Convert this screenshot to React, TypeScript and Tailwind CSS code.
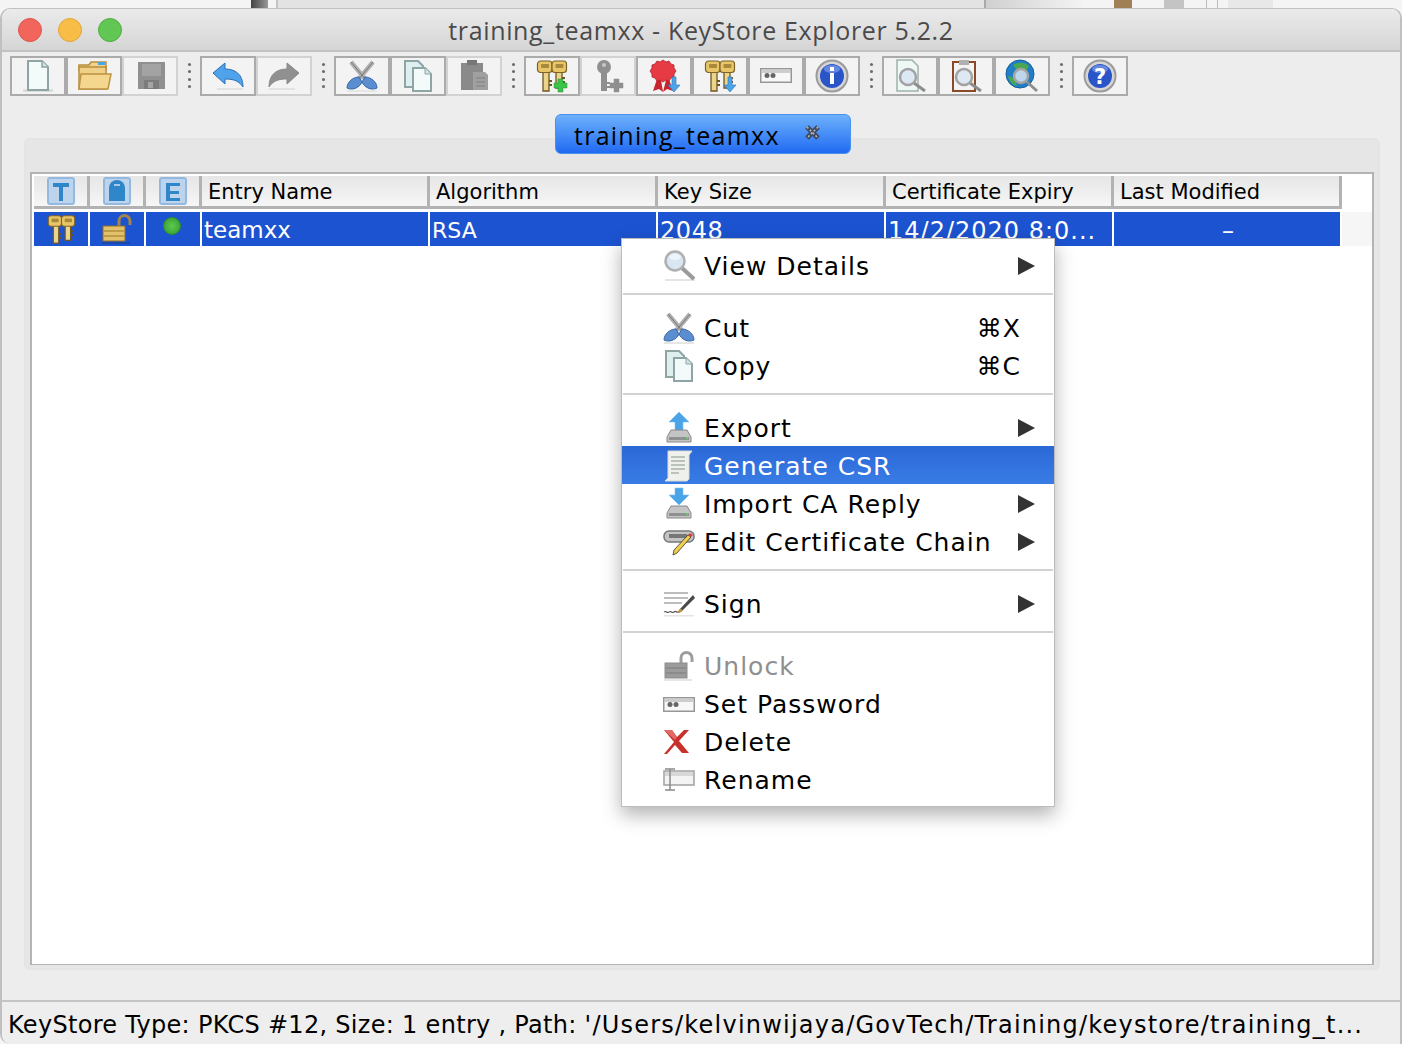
import type { ReactNode } from "react";

const FONT = "font-['DejaVu_Sans',sans-serif]";

// Small hand drawn versions of the app's toolbar and menu icons
const NewFile = () => (
  <svg width="32" height="34" viewBox="0 0 32 34">
    <rect x="1" y="30" width="30" height="3" fill="#dcdcdc" />
    <path d="M6 2h14l6 6v23H6z" fill="#f3fafa" stroke="#8fa5a5" strokeWidth="2" />
    <path d="M20 2v6h6" fill="#cfe3e3" stroke="#8fa5a5" strokeWidth="1.5" />
  </svg>
);

const Folder = () => (
  <svg width="36" height="34" viewBox="0 0 36 34">
    <path d="M3 6h10l2-3h15v8H3z" fill="#f3d28a" stroke="#b98f3f" strokeWidth="1.5" />
    <rect x="22" y="3" width="7" height="3" fill="#48a7e0" />
    <path d="M3 8h27v22H3z" fill="#f0cf86" stroke="#b98f3f" strokeWidth="1.5" />
    <path d="M5 15h30l-3 15H3z" fill="#f5d68f" stroke="#bd9344" strokeWidth="1.5" />
  </svg>
);

const Save = () => (
  <svg width="32" height="34" viewBox="0 0 32 34">
    <path d="M4 3h27v27H4z" fill="#909090" />
    <rect x="8" y="5" width="19" height="12" fill="#a3a3a3" />
    <rect x="10" y="21" width="15" height="9" fill="#7c7c7c" />
    <rect x="14" y="23" width="5" height="6" fill="#a5a5a5" />
  </svg>
);

const Arrow = ({ dir, grey }: { dir: "l" | "r"; grey?: boolean }) => (
  <svg width="34" height="30" viewBox="0 0 34 30" className={dir === "r" ? "-scale-x-100" : ""}>
    <path d="M2 12 14 2v6c10 0 18 5 18 18-4-6-9-8-18-8v5z" fill={grey ? "#909090" : "#4fa3ea"} stroke={grey ? "#8a8a8a" : "#2b6fb8"} strokeWidth="1" />
    <rect x="6" y="27" width="26" height="2" fill="#e2e2e2" />
  </svg>
);

const Cut = () => (
  <svg width="32" height="32" viewBox="0 0 32 32">
    <path d="M5 2 20 20M27 2 12 20" stroke="#b0b0b0" strokeWidth="4.5" />
    <path d="M5 2 20 20M27 2 12 20" stroke="#777" strokeWidth="1" />
    <path d="M1 28c0-6 6-11 12-11l3 5c-2 5-9 9-15 6zM31 28c0-6-6-11-12-11l-3 5c2 5 9 9 15 6z" fill="#5a8ed0" stroke="#3a69a8" strokeWidth="1" />
    <rect x="1" y="30" width="30" height="2" fill="#e6e6e6" />
  </svg>
);

const Copy = () => (
  <svg width="32" height="34" viewBox="0 0 32 34">
    <path d="M3 2h13l5 5v21H3z" fill="#dfeeee" stroke="#8fa5a5" strokeWidth="2" />
    <path d="M11 9h12l6 6v17H11z" fill="#f3fafa" stroke="#8fa5a5" strokeWidth="2" />
    <path d="M23 9v6h6" fill="#cfe3e3" stroke="#8fa5a5" strokeWidth="1" />
  </svg>
);

const Paste = () => (
  <svg width="32" height="34" viewBox="0 0 32 34">
    <rect x="3" y="4" width="22" height="27" fill="#8a8a8a" />
    <rect x="9" y="1" width="10" height="5" fill="#777" />
    <path d="M15 13h12l3 3v15H15z" fill="#a0a0a0" />
    <path d="M18 19h9M18 23h9M18 27h9" stroke="#8a8a8a" strokeWidth="1.5" />
  </svg>
);

const Keys = ({ badge, size = 34 }: { badge?: ReactNode; size?: number }) => (
  <svg width={size} height={size} viewBox="0 0 34 34">
    <path d="M8 12h6v20H8zM21 12h6v17h-6z" fill="#ecd48a" stroke="#6d5622" strokeWidth="1.3" />
    <path d="M14 22h3M14 26h3M27 19h3M27 23h3" stroke="#6d5622" strokeWidth="2" />
    <rect x="2.5" y="2" width="14.5" height="11.5" rx="3" fill="#e8c668" stroke="#7d6227" strokeWidth="1.2" />
    <rect x="17" y="2" width="14.5" height="11.5" rx="3" fill="#e8c668" stroke="#7d6227" strokeWidth="1.2" />
    <rect x="6" y="5" width="8" height="4" rx="1" fill="#a98a3c" />
    <rect x="20.5" y="5" width="8" height="4" rx="1" fill="#a98a3c" />
    {badge}
  </svg>
);

const PlusBadge = ({ color }: { color: string }) => (
  <path d="M23 20h5v4h4v5h-4v4h-5v-4h-4v-5h4z" fill={color} stroke={color === "#3cc34a" ? "#2c8a36" : color} strokeWidth="0.5" />
);

const DownBadge = () => <path d="M25 18h4v8h4l-6 7-6-7h4z" fill="#4ba4e8" stroke="#2c74b8" strokeWidth="0.6" />;

const GreyKey = () => (
  <svg width="34" height="34" viewBox="0 0 34 34">
    <circle cx="13" cy="8" r="7" fill="#8f8f8f" />
    <circle cx="13" cy="6" r="2" fill="#c8c8c8" />
    <rect x="10" y="13" width="6" height="19" fill="#8f8f8f" />
    <path d="M16 24h3M16 28h3" stroke="#8f8f8f" strokeWidth="2" />
    <PlusBadge color="#8f8f8f" />
  </svg>
);

const Ribbon = () => (
  <svg width="34" height="34" viewBox="0 0 34 34">
    <path d="M10 20 6 32l6-2 4 3 3-12zM22 20l4 12-6-2-4 3-2-12z" fill="#c9242b" />
    <path d="M16 1l3 2 3-1 2 3 3 1 0 3 2 3-2 3 0 3-3 1-2 3-3-1-3 2-3-2-3 1-2-3-3-1 0-3-2-3 2-3 0-3 3-1 2-3 3 1z" fill="#e63a44" stroke="#b3222a" strokeWidth="0.8" />
    <DownBadge />
  </svg>
);

const PasswordField = () => (
  <svg width="32" height="15" viewBox="0 0 32 15">
    <rect x="0.75" y="0.75" width="30.5" height="13.5" fill="#f8f8f8" stroke="#979797" strokeWidth="1.5" />
    <rect x="2" y="2" width="28" height="3" fill="#cdcdcd" />
    <circle cx="7" cy="7.5" r="2.5" fill="#666" />
    <circle cx="13" cy="7.5" r="2.5" fill="#666" />
  </svg>
);

const Circle = ({ children, fill = "#2a55c8" }: { children: ReactNode; fill?: string }) => (
  <svg width="34" height="34" viewBox="0 0 34 34">
    <circle cx="17" cy="17" r="15.5" fill="#d5d5d5" stroke="#9a9a9a" strokeWidth="2" />
    <circle cx="17" cy="17" r="12" fill={fill} />
    <ellipse cx="17" cy="10" rx="8" ry="4" fill="#7f9fe8" opacity="0.7" />
    {children}
  </svg>
);

const Lens = ({ x = 12, y = 12, r = 10, size = 34 }: { x?: number; y?: number; r?: number; size?: number }) => (
  <g>
    <path d={`M${x + r - 2} ${y + r - 2} L${size - 2} ${size - 2}`} stroke="#8d8d8d" strokeWidth="3" />
    <circle cx={x} cy={y} r={r} fill="#d8e5f2" fillOpacity="0.85" stroke="#a3a3a3" strokeWidth="2.5" />
  </g>
);

const ViewDoc = () => (
  <svg width="34" height="34" viewBox="0 0 34 34">
    <path d="M4 1h15l6 6v25H4z" fill="#eef8f4" stroke="#9fb2ad" strokeWidth="1.5" />
    <Lens x={15} y={18} r={8} />
  </svg>
);

const ViewClip = () => (
  <svg width="34" height="34" viewBox="0 0 34 34">
    <rect x="4" y="3" width="22" height="29" fill="#f3f3f3" stroke="#8a4a28" strokeWidth="2" />
    <rect x="10" y="1" width="10" height="5" fill="#b0b0b0" />
    <Lens x={15} y={18} r={8} />
  </svg>
);

const ViewGlobe = () => (
  <svg width="34" height="34" viewBox="0 0 34 34">
    <circle cx="15" cy="15" r="14" fill="#1f7ec8" stroke="#1a5f9c" strokeWidth="1" />
    <path d="M8 6c5-3 12-3 16 1l-3 5-5 1-5-3zM3 17l6 2 3 8c-5-1-8-5-9-10z" fill="#4aa651" />
    <Lens x={16} y={17} r={7} />
  </svg>
);

const Magnifier = () => (
  <svg width="34" height="34" viewBox="0 0 34 34">
    <rect x="2" y="30" width="30" height="2" fill="#e5e5e5" />
    <path d="M19 19 31 30" stroke="#9a9a9a" strokeWidth="4" />
    <circle cx="12" cy="12" r="9.5" fill="#d9e6f4" stroke="#b0b0b0" strokeWidth="2.5" />
    <ellipse cx="12" cy="8" rx="6" ry="3" fill="#eef4fb" />
  </svg>
);

const ExportIcon = ({ down }: { down?: boolean }) => (
  <svg width="32" height="34" viewBox="0 0 32 34">
    <path d={down ? "M12 1h8v7h6L16 18 6 8h6z" : "M16 1 26 11h-6v9h-8v-9H6z"} fill="#4ba4e8" stroke="#7cc0f4" strokeWidth="0.6" />
    <path d="M4 26 8 19h16l4 7v5H4z" fill="#c4c4c4" stroke="#888" strokeWidth="1" />
    <rect x="6" y="26" width="20" height="3" fill="#909090" />
    <rect x="23" y="26" width="2" height="2" fill="#5cd35c" />
  </svg>
);

const Scroll = () => (
  <svg width="30" height="34" viewBox="0 0 30 34">
    <path d="M5 2h24l-3 4v24l-2 2H2l3-3z" fill="#eef1ec" stroke="#d8dcd8" strokeWidth="1" />
    <path d="M8 8h14M8 12h14M8 16h14M8 20h14M8 24h8" stroke="#a9b4a9" strokeWidth="1.5" />
  </svg>
);

const EditChain = () => (
  <svg width="32" height="30" viewBox="0 0 32 30">
    <rect x="1" y="4" width="30" height="11" rx="5" fill="#c4c4c4" stroke="#777" strokeWidth="1.5" />
    <rect x="6" y="7" width="18" height="4" fill="#777" />
    <path d="M28 10 14 26l-4 2 1-5L25 8z" fill="#f0cf4a" stroke="#333" strokeWidth="0.8" />
    <path d="M25 8l3 2 2-2-3-2z" fill="#d04040" />
  </svg>
);

const SignIcon = () => (
  <svg width="32" height="26" viewBox="0 0 32 26">
    <path d="M1 2h24M1 7h24M1 12h18" stroke="#a8a8a8" strokeWidth="1.5" />
    <path d="M1 21c3-2 2 2 5 0s2 2 5 0 2 1 4 0" stroke="#555" strokeWidth="1.2" fill="none" />
    <path d="M30 4 17 18l-3 4 4-1L32 7z" fill="#4a4a4a" />
    <path d="M17 18l-3 4 4-1 2-2z" fill="#c9953c" />
    <rect x="1" y="24" width="30" height="1.5" fill="#e4e4e4" />
  </svg>
);

const LockOpen = ({ grey }: { grey?: boolean }) => (
  <svg width="32" height="30" viewBox="0 0 32 30">
    <path d="M18 13V7a5.5 5.5 0 0 1 11 0v4" fill="none" stroke={grey ? "#9d9d9d" : "#a3854a"} strokeWidth="3" />
    <rect x="2" y="12" width="22" height="15" fill={grey ? "#9b9b9b" : "#e3c06a"} stroke={grey ? "#8d8d8d" : "#8e6f2a"} strokeWidth="1" />
    <path d="M3 17h20M3 22h20" stroke={grey ? "#888" : "#b0903f"} strokeWidth="1.5" />
    <rect x="1" y="28" width="28" height="2" fill={grey ? "#e6e6e6" : "#1a47ab"} />
  </svg>
);

const DeleteIcon = () => (
  <svg width="28" height="26" viewBox="0 0 28 26">
    <path d="M1 1h8l5 7 7-7h5L16 12l10 12h-7l-7-8-8 9H1l10-12z" fill="#c9302c" />
    <path d="M1 1h8l5 7-2 3z" fill="#e26a66" />
  </svg>
);

const RenameIcon = () => (
  <svg width="32" height="24" viewBox="0 0 32 24">
    <rect x="1" y="3" width="30" height="14" fill="#f4f4f4" stroke="#a0a0a0" strokeWidth="1.5" />
    <rect x="2" y="4" width="28" height="4" fill="#d8d8d8" />
    <path d="M2 1h10M7 1v21M2 22h10" stroke="#8a8a8a" strokeWidth="1.5" />
  </svg>
);

const TabClose = () => (
  <svg width="15" height="15" viewBox="0 0 15 15">
    <path d="M2 2 13 13M13 2 2 13" stroke="#3f4a5e" strokeWidth="5" />
    <path d="M2 2 13 13M13 2 2 13" stroke="#b5bac2" strokeWidth="1.6" strokeDasharray="2 2" />
  </svg>
);

const HeaderIcon = ({ kind }: { kind: "T" | "L" | "E" }) => (
  <svg width="28" height="28" viewBox="0 0 28 28">
    <rect x="1" y="1" width="26" height="26" rx="2" fill="#bdd4ec" stroke="#94b9e0" strokeWidth="2" />
    {kind === "T" && <path d="M6 6h16v4h-6v14h-4V10H6z" fill="#2f86c9" />}
    {kind === "E" && <path d="M7 6h14v3H11v5h9v3h-9v4h10v3H7z" fill="#2f86c9" />}
    {kind === "L" && (
      <>
        <path d="M6 11a8 8 0 0 1 16 0v13H6z" fill="#2f86c9" />
        <rect x="11" y="7" width="6" height="2" fill="#a8c8e8" />
      </>
    )}
  </svg>
);

const ToolButton = ({ children, disabled }: { children: ReactNode; disabled?: boolean }) => (
  <div className={`flex h-10 w-14 items-center justify-center border-2 bg-[#f3f3f3] ${disabled ? "border-[#d2d2d2]" : "border-[#ababab]"}`}>
    {children}
  </div>
);

const Dots = () => (
  <div className="mx-[9px] flex h-7 w-1 flex-col items-center justify-between self-center py-px">
    {[0, 1, 2, 3].map((i) => (
      <span key={i} className="block size-[3px] rounded-full bg-[#6b6b6b]" />
    ))}
  </div>
);

const HeaderCell = ({ children, wide }: { children: ReactNode; wide?: boolean }) => (
  <div className={`flex h-full items-center border-r-[3px] border-[#b2b2b2] ${wide ? "w-[228px] pl-[6px] pt-[3px]" : "w-14 justify-center"}`}>
    {children}
  </div>
);

const RowCell = ({ children, wide, center, className = "" }: { children: ReactNode; wide?: boolean; center?: boolean; className?: string }) => (
  <div className={`flex h-full items-center overflow-hidden border-r-2 border-white bg-[#1c53d0] whitespace-nowrap text-white ${wide ? "w-[228px] pl-[2px] pt-[3px]" : "w-14"} ${center ? "justify-center" : ""} ${className}`}>
    {children}
  </div>
);

type MenuItemProps = {
  icon: ReactNode;
  label: string;
  shortcut?: string;
  arrow?: boolean;
  active?: boolean;
  disabled?: boolean;
};

const MenuItem = ({ icon, label, shortcut, arrow, active, disabled }: MenuItemProps) => (
  <div className={`flex h-[38px] items-center pr-[19px] pl-[41px] ${active ? "-mt-px mb-px bg-gradient-to-b from-[#2a68d6] to-[#3a7ce6] pt-[2px] text-white" : disabled ? "text-[#8f8f8f]" : "text-black"}`}>
    <div className="flex w-[41px] shrink-0 items-center">{icon}</div>
    <span className="flex-1 leading-none">{label}</span>
    {shortcut && <span className="pr-[14px] leading-none">{shortcut}</span>}
    {arrow && <span className="h-0 w-0 border-y-[9px] border-l-[17px] border-y-transparent border-l-[#333]" />}
  </div>
);

const MenuSep = () => (
  <div className="flex h-6 items-center px-px pb-[6px]">
    <div className="h-[2px] w-full bg-[#d2d2d2]" />
  </div>
);

const columns = ["Entry Name", "Algorithm", "Key Size", "Certificate Expiry", "Last Modified"];

export default function App() {
  return (
    <div className={`relative flex h-[1044px] w-[1402px] flex-col overflow-hidden bg-[#f5f5f5] ${FONT}`}>
      {/* Edge of whatever window sits behind */}
      <div className="flex h-2 shrink-0 bg-[#f4f4f4]">
        <div className="ml-[251px] w-[17px] bg-gradient-to-r from-[#444] to-[#999]" />
        <div className="ml-[8px] w-[2px] bg-[#c4c4c4]" />
        <div className="w-[706px] bg-[#e3e3e3]" />
        <div className="w-[2px] bg-[#aaa]" />
        <div className="w-[100px] bg-gradient-to-r from-[#d0d0d0] to-[#f5f5f5]" />
        <div className="ml-[28px] w-[18px] bg-[#a07f55]" />
        <div className="ml-[32px] w-[20px] bg-[#c4c4c4]" />
        <div className="ml-[22px] w-px bg-[#bbb]" />
        <div className="ml-[10px] w-px bg-[#bbb]" />
        <div className="ml-[10px] w-[45px] bg-[#e8e8e8]" />
      </div>

      <div className="flex min-h-0 flex-1 flex-col overflow-hidden rounded-t-[10px] rounded-bl-[10px] border-x-2 border-t border-[#c0c0c0] bg-[#ededed]">
        <div className="relative flex h-[43px] shrink-0 items-center justify-center border-b-2 border-[#c2c2c2] bg-gradient-to-b from-[#ebebeb] to-[#d5d5d5] pt-[2px]">
          <div className="absolute left-[16px] top-[9px] flex gap-[16px]">
            <span className="size-6 rounded-full border border-[#e0544c] bg-[#f1655c]" />
            <span className="size-6 rounded-full border border-[#e0a63c] bg-[#f8bd46]" />
            <span className="size-6 rounded-full border border-[#4fae3f] bg-[#62c655]" />
          </div>
          <span className="font-['Open_Sans',sans-serif] text-[25px] leading-none tracking-[0.65px] text-[#4a4a4a]">training_teamxx - KeyStore Explorer 5.2.2</span>
        </div>

        <div className="flex h-[44px] shrink-0 items-center pl-2 pt-[3px]">
          <ToolButton><NewFile /></ToolButton>
          <ToolButton><Folder /></ToolButton>
          <ToolButton disabled><Save /></ToolButton>
          <Dots />
          <ToolButton><Arrow dir="l" /></ToolButton>
          <ToolButton disabled><Arrow dir="r" grey /></ToolButton>
          <Dots />
          <ToolButton><Cut /></ToolButton>
          <ToolButton><Copy /></ToolButton>
          <ToolButton disabled><Paste /></ToolButton>
          <Dots />
          <ToolButton><Keys badge={<PlusBadge color="#3cc34a" />} /></ToolButton>
          <ToolButton disabled><GreyKey /></ToolButton>
          <ToolButton><Ribbon /></ToolButton>
          <ToolButton><Keys badge={<DownBadge />} /></ToolButton>
          <ToolButton><PasswordField /></ToolButton>
          <ToolButton><Circle><path d="M15 14h4v11h-4zM15 8h4v4h-4z" fill="#fff" /></Circle></ToolButton>
          <Dots />
          <ToolButton><ViewDoc /></ToolButton>
          <ToolButton><ViewClip /></ToolButton>
          <ToolButton><ViewGlobe /></ToolButton>
          <Dots />
          <ToolButton>
            <Circle><text x="17" y="25" textAnchor="middle" fontSize="21" fontWeight="700" fill="#fff" fontFamily="DejaVu Sans">?</text></Circle>
          </ToolButton>
        </div>

        {/* Tabbed pane */}
        <div className="relative mt-[42px] mr-[20px] ml-[22px] flex h-[832px] shrink-0 flex-col rounded-md border-2 border-[#e4e4e4] bg-[#e6e6e6] px-[4px] pt-[32px] pb-[3px]">
          <div className="absolute -top-[26px] left-[529px] flex h-10 w-[296px] items-center rounded-md border border-[#4a90ee] bg-gradient-to-b from-[#6eb0fb] to-[#2069f2] pt-[3px] pl-[18px] text-[25px] leading-none text-black">
            <span className="font-['Open_Sans',sans-serif] tracking-[1.25px]">training_teamxx</span>
            <span className="ml-[25px] -mt-[7px]"><TabClose /></span>
          </div>

          <div className="flex min-h-0 flex-1 flex-col border-2 border-b-[1px] border-[#b4b4b4] bg-white pl-[2px] text-[21px]">
            <div className="h-[34px] shrink-0 pt-[2px]">
              <div className="flex h-[33px] w-max border-b-[3px] border-[#b2b2b2] bg-gradient-to-b from-[#e6e6e6] to-[#f6f6f6] text-black">
                <HeaderCell><HeaderIcon kind="T" /></HeaderCell>
                <HeaderCell><HeaderIcon kind="L" /></HeaderCell>
                <HeaderCell><HeaderIcon kind="E" /></HeaderCell>
                {columns.map((c) => (
                  <HeaderCell key={c} wide><span>{c}</span></HeaderCell>
                ))}
              </div>
            </div>
            <div className="mt-1 flex h-[34px] shrink-0 items-stretch text-[24px]">
              <RowCell center><Keys size={31} /></RowCell>
              <RowCell center><LockOpen /></RowCell>
              <RowCell center className="pr-[3px]">
                <span className="mb-[6px] block size-[18px] rounded-full border border-[#2f8a2f] bg-[radial-gradient(circle,#5fc84c,#2f9a30)]" />
              </RowCell>
              <RowCell wide><span className="text-[23px]">teamxx</span></RowCell>
              <RowCell wide><span className="text-[22px]">RSA</span></RowCell>
              <RowCell wide><span className="tracking-[0.6px]">2048</span></RowCell>
              <RowCell wide><span className="tracking-[1px]">14/2/2020 8:0...</span></RowCell>
              <RowCell wide center>–</RowCell>
              <div className="flex-1 bg-[#f6f6f6]" />
            </div>
          </div>
        </div>

        <div className="mt-auto flex h-[44px] shrink-0 items-center overflow-hidden border-t-[2px] border-[#c4c4c4] bg-[#eeeeee] pt-[4px] pl-[6px] text-[24px] whitespace-pre text-black">
          <span className="tracking-[0.3px]">KeyStore Type: PKCS #12, Size: 1 entry , Path: </span>
          <span className="tracking-[1.22px]">'/Users/kelvinwijaya/GovTech/Training/keystore/training_t...</span>
        </div>
      </div>

      {/* Context menu */}
      <div className="absolute left-[621px] top-[238px] h-[569px] w-[434px] border border-[#bcbcbc] bg-white pt-2 text-[25px] tracking-[1px] shadow-[0_8px_18px_rgba(0,0,0,0.3)]">
        <MenuItem icon={<Magnifier />} label="View Details" arrow />
        <MenuSep />
        <MenuItem icon={<Cut />} label="Cut" shortcut="⌘X" />
        <MenuItem icon={<Copy />} label="Copy" shortcut="⌘C" />
        <MenuSep />
        <MenuItem icon={<ExportIcon />} label="Export" arrow />
        <MenuItem icon={<Scroll />} label="Generate CSR" active />
        <MenuItem icon={<ExportIcon down />} label="Import CA Reply" arrow />
        <MenuItem icon={<EditChain />} label="Edit Certificate Chain" arrow />
        <MenuSep />
        <MenuItem icon={<SignIcon />} label="Sign" arrow />
        <MenuSep />
        <MenuItem icon={<LockOpen grey />} label="Unlock" disabled />
        <MenuItem icon={<PasswordField />} label="Set Password" />
        <MenuItem icon={<DeleteIcon />} label="Delete" />
        <MenuItem icon={<RenameIcon />} label="Rename" />
      </div>
    </div>
  );
}
